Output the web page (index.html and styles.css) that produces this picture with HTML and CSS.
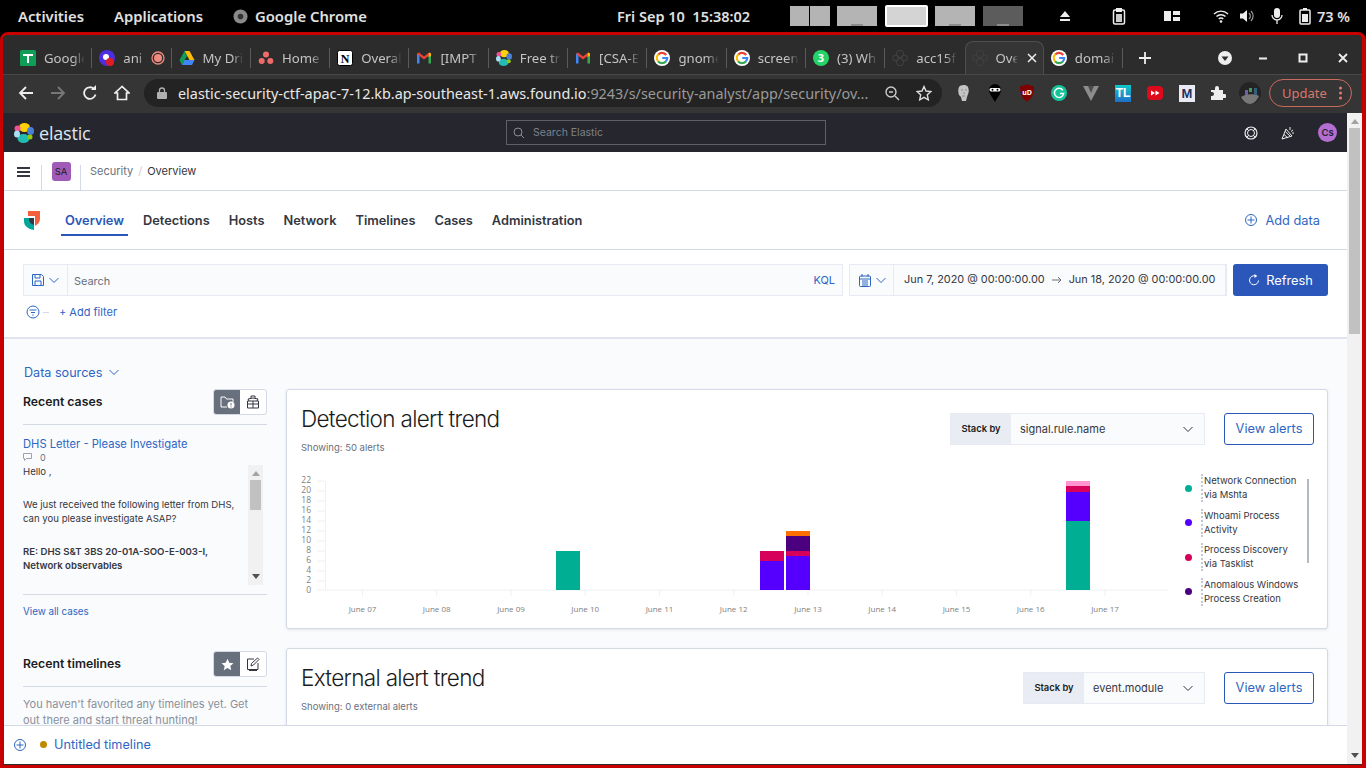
FILE: index.html
```html
<!DOCTYPE html>
<html lang="en">

<head>
    <meta charset="UTF-8">
    <title>Overview - Elastic - Google Chrome</title>
    <link rel="stylesheet" href="styles.css">
</head>

<body>
    <svg class="defs" width="0" height="0">
        <defs>
            <linearGradient id="tl-grad" x1="0" y1="0" x2="0" y2="1">
                <stop offset="0" stop-color="#12c9c9" />
                <stop offset="1" stop-color="#1f6fc8" />
            </linearGradient>
        </defs>
        <symbol id="g" viewBox="0 0 16 16">
            <circle cx="8" cy="8" r="8" fill="#fff" />
            <path d="M12.2 5A5.2 5.2 0 0 0 4.3 4.5" fill="none" stroke="#ea4335" stroke-width="2.2" />
            <path d="M4.4 4.3A5.2 5.2 0 0 0 4.3 11.6" fill="none" stroke="#fbbc05" stroke-width="2.2" />
            <path d="M4.2 11.4A5.2 5.2 0 0 0 11.9 11.4" fill="none" stroke="#34a853" stroke-width="2.2" />
            <path d="M11.7 11.6A5.2 5.2 0 0 0 13.2 8H8.2" fill="none" stroke="#4285f4" stroke-width="2.2" />
        </symbol>
        <symbol id="gmail" viewBox="0 0 16 16">
            <path d="M1 3.5 3.5 5v8.5H1z" fill="#4285f4" />
            <path d="M15 3.5 12.500 5v8.500H15z" fill="#34a853" />
            <path d="M1 3.500 3 2.500 8 6.500 13 2.500 15 3.500 12.500 6 8 9.500 3.500 6z" fill="#ea4335" />
            <path d="M13 2.500 15 3.500 15 6 12.500 7z" fill="#fbbc05" />
        </symbol>
        <symbol id="elastic" viewBox="0 0 20 20">
            <ellipse cx="10.500" cy="4.500" rx="5.500" ry="4.500" fill="#fed10a" />
            <ellipse cx="9.500" cy="15.500" rx="6" ry="4.500" fill="#24bbb1" />
            <ellipse cx="3.500" cy="5.500" rx="3" ry="3" fill="#ef5098" />
            <ellipse cx="16.500" cy="8" rx="3.500" ry="4" fill="#4a7fd6" />
            <ellipse cx="3" cy="11" rx="3" ry="3.500" fill="#a7e0f5" />
            <ellipse cx="16" cy="14" rx="2.500" ry="2.500" fill="#93c90e" />
        </symbol>
        <symbol id="elastic-dim" viewBox="0 0 20 20">
            <g fill="none" stroke="#3f3f3f" stroke-width="1.400">
                <circle cx="10" cy="5" r="4.500" />
                <circle cx="10" cy="15" r="4.500" />
                <circle cx="4.500" cy="10" r="3.500" />
                <circle cx="15.500" cy="10" r="3.500" />
            </g>
        </symbol>
        <symbol id="chev" viewBox="0 0 12 12">
            <path d="M1.500 4 6 8.500 10.500 4" fill="none" stroke="currentColor" stroke-width="1" />
        </symbol>
        <symbol id="plus-circle" viewBox="0 0 14 14">
            <circle cx="7" cy="7" r="5.500" fill="none" stroke="currentColor" />
            <path d="M7 3.500v7M3.500 7h7" stroke="currentColor" />
        </symbol>
    </svg>

    <header class="topbar">
        <span class="top-item">Activities</span>
        <span class="top-item apps">Applications</span>
        <svg class="chrome-ico" width="15" height="15" viewBox="0 0 16 16">
            <circle cx="8" cy="8" r="7.500" fill="#8a8a8a" />
            <circle cx="8" cy="8" r="3" fill="#333" />
        </svg>
        <span class="top-item">Google Chrome</span>
        <span class="clock">Fri Sep 10&nbsp; 15:38:02</span>
        <div class="workspaces">
            <div class="ws split"><i></i><i></i></div>
            <div class="ws"></div>
            <div class="ws current"></div>
            <div class="ws"></div>
            <div class="ws dark"></div>
        </div>
        <div class="tray">
            <svg class="t-eject" width="14" height="14" viewBox="0 0 14 14"><path d="M7 2 12 8H2zM2 10h10v2H2z" fill="#eee" /></svg>
            <svg class="t-clip" width="14" height="18" viewBox="0 0 14 18"><rect x="1.500" y="3" width="11" height="14" rx="1.500" fill="none" stroke="#eee" stroke-width="1.500" /><rect x="4" y="1" width="6" height="4" fill="#eee" /><rect x="4" y="7" width="6" height="8" fill="#ccc" /></svg>
            <svg class="t-layout" width="16" height="12" viewBox="0 0 16 12"><path d="M0 1h7v10H0zM9 1h7v4H9zM9 7h7v4H9z" fill="#eee" /></svg>
            <svg class="t-wifi" width="16" height="14" viewBox="0 0 16 14"><path d="M1 5a10 10 0 0 1 14 0M3.500 7.500a6.500 6.500 0 0 1 9 0M5.800 10a3 3 0 0 1 4.400 0" fill="none" stroke="#eee" stroke-width="1.400" /><circle cx="8" cy="12.500" r="1.300" fill="#eee" /></svg>
            <svg class="t-vol" width="16" height="16" viewBox="0 0 16 16"><path d="M1 5.500h3L8 2v12L4 10.500H1z" fill="#eee" /><path d="M10 5a4 4 0 0 1 0 6M12 3a7 7 0 0 1 0 10" fill="none" stroke="#999" stroke-width="1.200" /></svg>
            <svg class="t-mic" width="14" height="18" viewBox="0 0 14 18"><rect x="4" y="1" width="6" height="10" rx="3" fill="#eee" /><path d="M2 8a5 5 0 0 0 10 0M7 13v4" fill="none" stroke="#eee" stroke-width="1.300" /></svg>
            <svg class="t-bat" width="12" height="18" viewBox="0 0 12 18"><path d="M4 1h4v2H4z" fill="#eee" /><rect x="1" y="3" width="10" height="14" rx="1" fill="none" stroke="#eee" stroke-width="1.500" /><rect x="3" y="7" width="6" height="8" fill="#eee" /></svg>
            <span class="top-item pct">73 %</span>
        </div>
    </header>

    <div class="window">
        <div class="tabstrip">
            <div class="tab"><svg class="fav" viewBox="0 0 16 16"><rect width="16" height="16" rx="1.500" fill="#0f9d58" /><path d="M7 4H3v2h4v7h2V6h4V4H9z" fill="#fff" /></svg><span class="tab-title">Google</span></div>
            <div class="tab"><svg class="fav" viewBox="0 0 16 16"><circle cx="8" cy="8" r="8" fill="#4d2ee0" /><circle cx="7" cy="7" r="3" fill="#fff" /><circle cx="11" cy="12" r="4" fill="#e01b24" /></svg><span class="tab-title short">ani</span><svg class="rec" viewBox="0 0 14 14"><circle cx="7" cy="7" r="6" fill="none" stroke="#ee8a7e" stroke-width="1.300" /><circle cx="7" cy="7" r="4" fill="#ee8a7e" /></svg></div>
            <div class="tab"><svg class="fav" viewBox="0 0 16 16"><path d="M5.500 1h5l5 9h-5z" fill="#fbbc05" /><path d="M5.500 1 .5 10 3 15 8 6z" fill="#0f9d58" /><path d="M3 15h10l2.500-5H5.500z" fill="#4285f4" /></svg><span class="tab-title">My Dri</span></div>
            <div class="tab"><svg class="fav" viewBox="0 0 16 16"><circle cx="8" cy="4.500" r="3" fill="#f06a6a" /><circle cx="3.700" cy="11" r="3" fill="#f06a6a" /><circle cx="12.300" cy="11" r="3" fill="#f06a6a" /></svg><span class="tab-title">Home</span></div>
            <div class="tab"><svg class="fav" viewBox="0 0 16 16"><rect x=".5" y=".5" width="15" height="15" rx="2" fill="#fff" stroke="#000" /><text x="8" y="13" class="fav-n">N</text></svg><span class="tab-title">Overal</span></div>
            <div class="tab"><svg class="fav"><use href="#gmail" /></svg><span class="tab-title">[IMPT</span></div>
            <div class="tab"><svg class="fav"><use href="#elastic" /></svg><span class="tab-title">Free tr</span></div>
            <div class="tab"><svg class="fav"><use href="#gmail" /></svg><span class="tab-title">[CSA-E</span></div>
            <div class="tab"><svg class="fav"><use href="#g" /></svg><span class="tab-title">gnome</span></div>
            <div class="tab"><svg class="fav"><use href="#g" /></svg><span class="tab-title">screen</span></div>
            <div class="tab"><svg class="fav" viewBox="0 0 16 16"><circle cx="8" cy="8" r="8" fill="#25d366" /><text x="8" y="12" class="fav-3">3</text></svg><span class="tab-title">(3) Wh</span></div>
            <div class="tab no-sep"><svg class="fav"><use href="#elastic-dim" /></svg><span class="tab-title">acc15f</span></div>
            <div class="tab active"><svg class="fav"><use href="#elastic-dim" /></svg><span class="tab-title short">Ove</span><svg class="tab-x" viewBox="0 0 10 10"><path d="M1 1l8 8M9 1l-8 8" stroke="#eee" stroke-width="1.500" /></svg></div>
            <div class="tab"><svg class="fav"><use href="#g" /></svg><span class="tab-title">domai</span></div>
            <svg class="new-tab" width="14" height="14" viewBox="0 0 14 14"><path d="M7 1v12M1 7h12" stroke="#f0f0f0" stroke-width="1.800" /></svg>
            <div class="win-btns">
                <svg class="win-menu" width="14" height="14" viewBox="0 0 14 14"><circle cx="7" cy="7" r="7" fill="#eee" /><path d="M3.500 5.500h7L7 10z" fill="#2c2c2c" /></svg>
                <svg width="10" height="10" viewBox="0 0 10 10"><path d="M1 5.500h8" stroke="#eee" stroke-width="2" /></svg>
                <svg width="10" height="10" viewBox="0 0 10 10"><rect x="1.500" y="1.500" width="7" height="7" fill="none" stroke="#eee" stroke-width="2" /></svg>
                <svg width="10" height="10" viewBox="0 0 10 10"><path d="M1 1l8 8M9 1l-8 8" stroke="#eee" stroke-width="1.800" /></svg>
            </div>
        </div>

        <div class="toolbar">
            <svg class="nav-ico" viewBox="0 0 16 16"><path d="M15 8H2M8 2 2 8l6 6" fill="none" stroke="#eee" stroke-width="1.800" /></svg>
            <svg class="nav-ico" viewBox="0 0 16 16"><path d="M1 8h13M8 2l6 6-6 6" fill="none" stroke="#777" stroke-width="1.800" /></svg>
            <svg class="nav-ico" viewBox="0 0 16 16"><path d="M13.500 9.500A5.800 5.800 0 1 1 12 4" fill="none" stroke="#eee" stroke-width="1.800" /><path d="M9 5h5V0z" fill="#eee" /></svg>
            <svg class="nav-ico" viewBox="0 0 16 16"><path d="M8 1.500 1 8h2.500v6.500h9V8H15z" fill="none" stroke="#eee" stroke-width="1.700" /></svg>
            <div class="omnibox">
                <svg class="lock" width="10" height="12" viewBox="0 0 10 12"><rect y="5" width="10" height="7" rx="1" fill="#b0b0b0" /><path d="M2.500 5.500V3.500a2.500 2.500 0 0 1 5 0v2" fill="none" stroke="#b0b0b0" stroke-width="1.300" /></svg>
                <span class="url"><b>elastic-security-ctf-apac-7-12.kb.ap-southeast-1.aws.found.io</b>:9243/s/security-analyst/app/security/ov...</span>
                <svg class="omni-ico" viewBox="0 0 16 16"><circle cx="7" cy="7" r="5" fill="none" stroke="#ccc" stroke-width="1.400" /><path d="M11 11l4 4M5 7h4" stroke="#ccc" stroke-width="1.400" /></svg>
                <svg class="omni-ico" viewBox="0 0 16 16"><path d="M8 1.500 10 6l5 .5-3.700 3.300 1 5L8 12.300 3.700 14.800l1-5L1 6.500 6 6z" fill="none" stroke="#ddd" stroke-width="1.400" /></svg>
            </div>
            <div class="exts">
                <svg class="ext tall" viewBox="0 0 16 18"><path d="M4 3c1-2 7-3 9 0 1 3 1 5 0 7l-1 3-1 4H7l-1-4-2-2C3 8 3 5 4 3z" fill="#c4c4c4" /><path d="M6 6h2M10 6h2M8 9h2M7 12h3" stroke="#8a8a8a" /></svg>
                <svg class="ext tall" viewBox="0 0 16 18"><path d="M2 6a6 6 0 0 1 12 0c0 4-4 8-6 12-2-4-6-8-6-12z" fill="#000" /><rect x="2.500" y="4" width="11" height="3.500" rx="1.700" fill="#fff" /><circle cx="5.500" cy="5.700" r="1" fill="#000" /><circle cx="10.500" cy="5.700" r="1" fill="#000" /></svg>
                <svg class="ext tall" viewBox="0 0 16 18"><path d="M8 .5l7 2c0 7-2 12-7 15C3 14.500 1 9.500 1 2.500z" fill="#800000" /><text x="8" y="11" class="ext-ub">uD</text></svg>
                <svg class="ext" viewBox="0 0 16 16"><circle cx="8" cy="8" r="8" fill="#15c39a" /><path d="M11.800 5.200A4.600 4.600 0 1 0 12.600 8.500H9" fill="none" stroke="#fff" stroke-width="1.500" /></svg>
                <svg class="ext" viewBox="0 0 16 16"><path d="M0 1h6l2 5 2-5h6L8 16z" fill="#8c8c8c" /><path d="M5 1h6L8 8z" fill="#4c4c4c" /></svg>
                <div class="ext-tl">TL</div>
                <svg class="ext" viewBox="0 0 16 16"><rect width="16" height="14" y="1" rx="4" fill="#dd0a1c" /><path d="M4 5.500v5L8 8zM8.500 5.500v5L12.500 8z" fill="#fff" /></svg>
                <div class="ext-m">M</div>
                <svg class="ext" viewBox="0 0 16 16"><path d="M1 5h4V3a2 2 0 0 1 4 0v2h4v4h1.500a2 2 0 0 1 0 4H13v2H1v-4h1a2 2 0 0 0 0-4H1z" fill="#eee" /></svg>
                <svg class="ext avatar" viewBox="0 0 22 22"><circle cx="11" cy="11" r="11" fill="#242424" /><path d="M2 15c3-3 14-4 18-1-2 5-6 8-9 8-4 0-7-3-9-7z" fill="#777" /><rect x="6" y="8" width="3" height="5" fill="#6f5fa8" /><rect x="10" y="6" width="3" height="4" fill="#3f9a55" /><rect x="15" y="6" width="3" height="7" fill="#35607d" /></svg>
            </div>
            <div class="update">Update<svg width="3" height="14" viewBox="0 0 3 14"><circle cx="1.500" cy="2" r="1.500" fill="#e9786a" /><circle cx="1.500" cy="7" r="1.500" fill="#e9786a" /><circle cx="1.500" cy="12" r="1.500" fill="#e9786a" /></svg></div>
        </div>

        <div class="viewport">
            <div class="page">
                <div class="kbn-head">
                    <div class="kbn-logo">
                        <svg width="20" height="20"><use href="#elastic" /></svg>
                        <span>elastic</span>
                    </div>
                    <div class="kbn-search">
                        <svg width="12" height="12" viewBox="0 0 12 12"><circle cx="5" cy="5" r="4" fill="none" stroke="#8b8d94" /><path d="M8 8l3 3" stroke="#8b8d94" /></svg>
                        <span>Search Elastic</span>
                    </div>
                    <div class="kbn-right">
                        <svg width="14" height="14" viewBox="0 0 14 14"><circle cx="7" cy="7" r="6" fill="none" stroke="#eee" stroke-width="1.200" /><circle cx="7" cy="7" r="3.500" fill="none" stroke="#eee" /><path d="M2.800 2.800l2 2M11.200 2.800l-2 2M2.800 11.200l2-2M11.200 11.200l-2-2" stroke="#eee" /></svg>
                        <svg width="14" height="14" viewBox="0 0 14 14"><path d="M1 13 5 3l6 7zM9 1v3M12 4l-2 1.500M13 7h-2" fill="none" stroke="#eee" /><path d="M3 8.500 7 12M4.200 5.500 9 10" stroke="#eee" /></svg>
                        <div class="user">Cs</div>
                    </div>
                </div>

                <div class="crumbs">
                    <div class="burger"><i></i><i></i><i></i></div>
                    <div class="space-cell"><div class="space">SA</div></div>
                    <span class="crumb">Security</span>
                    <span class="crumb-sep">/</span>
                    <span class="crumb-on">Overview</span>
                </div>

                <nav class="secnav">
                    <svg class="sec-logo" width="16" height="19" viewBox="0 0 16 19">
                        <path d="M4 0H16V8C16 11 14 13 11 15V5H4z" fill="#f4603c" />
                        <path d="M0 7H10V19C4 18 0 15 0 10z" fill="#00a69b" />
                        <path d="M5 7h5v7C7 13 5 11 5 9z" fill="#343741" />
                    </svg>
                    <a class="nav-link on">Overview</a>
                    <a class="nav-link">Detections</a>
                    <a class="nav-link">Hosts</a>
                    <a class="nav-link">Network</a>
                    <a class="nav-link">Timelines</a>
                    <a class="nav-link">Cases</a>
                    <a class="nav-link">Administration</a>
                    <a class="add-data"><svg width="14" height="14" class="blue"><use href="#plus-circle" /></svg>Add data</a>
                </nav>

                <div class="query">
                    <div class="query-row">
                        <div class="field search-field">
                            <div class="prepend">
                                <svg width="14" height="14" viewBox="0 0 14 14" class="blue"><path d="M1.500 1.500h9l2 2v9h-11zM4 1.500v3.500h5V1.500M4 12.500V8h6v4.500" fill="none" stroke="currentColor" /></svg>
                                <svg width="12" height="12" class="blue"><use href="#chev" /></svg>
                            </div>
                            <span class="placeholder">Search</span>
                            <span class="kql">KQL</span>
                        </div>
                        <div class="field date-field">
                            <div class="prepend">
                                <svg width="12" height="13" viewBox="0 0 12 13" class="blue"><rect x=".5" y="2" width="11" height="10.500" rx="1" fill="none" stroke="currentColor" /><path d="M.5 5h11M3 0v3M9 0v3M3 7h6M3 9h6M3 11h6" stroke="currentColor" /></svg>
                                <svg width="12" height="12" class="blue"><use href="#chev" /></svg>
                            </div>
                            <span class="date">Jun 7, 2020 @ 00:00:00.00</span>
                            <svg width="10" height="8" viewBox="0 0 10 8"><path d="M0 4h9M6 1l3 3-3 3" fill="none" stroke="#69707d" /></svg>
                            <span class="date">Jun 18, 2020 @ 00:00:00.00</span>
                        </div>
                        <div class="refresh">
                            <svg width="12" height="12" viewBox="0 0 12 12"><path d="M10.500 6.500A4.500 4.500 0 1 1 7.500 2" fill="none" stroke="#fff" /><path d="M6.500 0v4l2.800-2z" fill="#fff" /></svg>
                            Refresh
                        </div>
                    </div>
                    <div class="filter-row">
                        <svg width="14" height="14" viewBox="0 0 14 14" class="blue"><circle cx="7" cy="7" r="6" fill="none" stroke="currentColor" /><path d="M3.500 5h7M5 7.500h4M6.300 10h1.400" stroke="currentColor" /></svg>
                        <i class="dash"></i>
                        <a class="add-filter">+ Add filter</a>
                    </div>
                </div>

                <div class="content">
                    <aside class="side">
                        <a class="sources">Data sources<svg width="12" height="12"><use href="#chev" /></svg></a>

                        <div class="side-head">
                            <h3>Recent cases</h3>
                            <div class="toggle">
                                <span class="on"><svg width="15" height="14" viewBox="0 0 15 14"><path d="M1 12V2h4l1.500 2H13v3M1 12h6" fill="none" stroke="#fff" /><circle cx="11" cy="10" r="3.500" fill="#fff" /><path d="M11 8v2.500M11 11.500v1" stroke="#69707d" /></svg></span>
                                <span><svg width="14" height="14" viewBox="0 0 14 14"><path d="M1.500 6h11v7h-11zM1.500 9h11M7 6v7M3 6 2 4l5-1 5 1-1 2M5 3V1h4v2" fill="none" stroke="#343741" /></svg></span>
                            </div>
                        </div>
                        <div class="case">
                            <a class="case-title">DHS Letter - Please Investigate</a>
                            <div class="comments"><svg width="10" height="9" viewBox="0 0 10 9"><path d="M.5.500h8v5h-5l-2 2v-2h-1z" fill="none" stroke="#98a2b3" /></svg>0</div>
                            <div class="case-body">
                                <div class="case-text">
                                    <p>Hello ,</p>
                                    <p>We just received the following letter from DHS, can you please investigate ASAP?</p>
                                    <p><b>RE: DHS S&amp;T 3BS 20-01A-SOO-E-003-I, Network observables</b></p>
                                </div>
                                <div class="sb mini">
                                    <i class="up"></i>
                                    <b></b>
                                    <i class="down"></i>
                                </div>
                            </div>
                        </div>
                        <a class="view-all">View all cases</a>

                        <div class="side-head second">
                            <h3>Recent timelines</h3>
                            <div class="toggle">
                                <span class="on"><svg width="13" height="13" viewBox="0 0 16 16"><path d="M8 1l2.200 4.800 5.200.6-3.900 3.500 1.100 5.100L8 12.400 3.400 15l1.100-5.100L.6 6.400l5.200-.6z" fill="#fff" /></svg></span>
                                <span><svg width="14" height="14" viewBox="0 0 14 14"><path d="M8 2H1.500v10.500H12V6M5 9l.5-2.500L11.500 1 13 2.500 7.500 8zM3 13.500h8" fill="none" stroke="#343741" /></svg></span>
                            </div>
                        </div>
                        <p class="empty">You haven't favorited any timelines yet. Get out there and start threat hunting!</p>
                    </aside>

                    <main class="cards">
                        <section class="card">
                            <div class="card-head">
                                <div>
                                    <h2>Detection alert trend</h2>
                                    <div class="showing">Showing: 50 alerts</div>
                                </div>
                                <div class="controls">
                                    <div class="stack wide"><label>Stack by</label><span>signal.rule.name<svg width="12" height="12"><use href="#chev" /></svg></span></div>
                                    <a class="view-btn">View alerts</a>
                                </div>
                            </div>
                            <div class="chart-row">
                                <svg class="chart" width="871" height="150" viewBox="301 470 871 150">
                                    <path d="M325.500 481V590M317 590H1168" class="axis" />
                                    <path d="M317 481h8M317 491h8M317 501h8M317 511h8M317 521h8M317 531h8M317 541h8M317 551h8M317 561h8M317 571h8M317 581h8" class="axis" />
                                    <path d="M362.500 590v6M436.700 590v6M511 590v6M585.200 590v6M659.500 590v6M733.700 590v6M808 590v6M882.200 590v6M956.500 590v6M1030.700 590v6M1105 590v6" class="axis" />
                                    <g class="y-label">
                                        <text x="311" y="483">22</text><text x="311" y="493">20</text><text x="311" y="503">18</text><text x="311" y="513">16</text><text x="311" y="523">14</text><text x="311" y="533">12</text><text x="311" y="543">10</text><text x="311" y="553">8</text><text x="311" y="563">6</text><text x="311" y="573">4</text><text x="311" y="583">2</text><text x="311" y="593">0</text>
                                    </g>
                                    <g class="x-label">
                                        <text x="362.500" y="612">June 07</text><text x="436.700" y="612">June 08</text><text x="511" y="612">June 09</text><text x="585.200" y="612">June 10</text><text x="659.500" y="612">June 11</text><text x="733.700" y="612">June 12</text><text x="808" y="612">June 13</text><text x="882.200" y="612">June 14</text><text x="956.500" y="612">June 15</text><text x="1030.700" y="612">June 16</text><text x="1105" y="612">June 17</text>
                                    </g>
                                    <rect x="556" y="551" width="24" height="39" fill="#00ae94" />
                                    <rect x="760" y="561" width="24" height="29" fill="#5500ff" />
                                    <rect x="760" y="551" width="24" height="10" fill="#d6005a" />
                                    <rect x="786" y="556" width="24" height="34" fill="#5500ff" />
                                    <rect x="786" y="551" width="24" height="5" fill="#d6005a" />
                                    <rect x="786" y="536" width="24" height="15" fill="#4a007f" />
                                    <rect x="786" y="531" width="24" height="5" fill="#ff7000" />
                                    <rect x="1066" y="521" width="24" height="69" fill="#00ae94" />
                                    <rect x="1066" y="492" width="24" height="29" fill="#5500ff" />
                                    <rect x="1066" y="486" width="24" height="6" fill="#d6005a" />
                                    <rect x="1066" y="481" width="24" height="5" fill="#ff94d0" />
                                </svg>
                                <ul class="legend">
                                    <li><i class="dot c1"></i><span>Network Connection via Mshta</span></li>
                                    <li><i class="dot c2"></i><span>Whoami Process Activity</span></li>
                                    <li><i class="dot c3"></i><span>Process Discovery via Tasklist</span></li>
                                    <li><i class="dot c4"></i><span>Anomalous Windows Process Creation</span></li>
                                </ul>
                                <div class="legend-bar"></div>
                            </div>
                        </section>

                        <section class="card">
                            <div class="card-head">
                                <div>
                                    <h2>External alert trend</h2>
                                    <div class="showing">Showing: 0 external alerts</div>
                                </div>
                                <div class="controls">
                                    <div class="stack"><label>Stack by</label><span>event.module<svg width="12" height="12"><use href="#chev" /></svg></span></div>
                                    <a class="view-btn">View alerts</a>
                                </div>
                            </div>
                        </section>
                    </main>
                </div>

                <div class="timeline-bar">
                    <svg width="14" height="14" class="blue"><use href="#plus-circle" /></svg>
                    <i class="tl-dot"></i>
                    <a>Untitled timeline</a>
                </div>
            </div>

            <div class="sb">
                <i class="up"></i>
                <b></b>
                <i class="down"></i>
            </div>
        </div>
    </div>
</body>

</html>
```

FILE: styles.css
```css
* {
    margin: 0;
    padding: 0;
    box-sizing: border-box;
    list-style: none;
}

html,
body {
    width: 1366px;
    height: 768px;
    overflow: hidden;
    background: #000;
}

body {
    font-family: Inter, "Liberation Sans", sans-serif;
}

a {
    color: #2d66c3;
}

.defs {
    position: absolute;
}

.blue {
    color: #2d66c3;
}

/* gnome top bar */
.topbar {
    height: 32px;
    display: flex;
    align-items: center;
    padding-left: 18px;
    font-family: "Noto Sans", sans-serif;
    color: #e0e0e0;
}

.top-item {
    font-size: 14.800px;
    font-weight: 600;
    white-space: nowrap;
}

.apps {
    margin-left: 30px;
}

.chrome-ico {
    margin: 0 7px 0 30px;
}

.clock {
    margin-left: 250px;
    width: 173px;
    font-size: 14.500px;
    font-weight: 600;
    white-space: nowrap;
}

.workspaces {
    display: flex;
    gap: 7.500px;
    height: 21px;
}

.ws {
    width: 40px;
    height: 20px;
    background: linear-gradient(90deg, transparent 35%, #8c8c8c 35%, #8c8c8c 65%, transparent 65%) bottom / 100% 2px no-repeat #b4b4b4;
    display: flex;
    gap: 1px;
}

.ws.split {
    background: transparent;
}

.ws.split i {
    flex: 1;
    background: #b4b4b4;
}

.ws.current {
    width: 43px;
    height: 22px;
    margin-top: -1px;
    background: #d4d4d4;
    border: 2px solid #fff;
    border-radius: 2px;
}

.ws.dark {
    background: linear-gradient(90deg, transparent 35%, #8c8c8c 35%, #8c8c8c 65%, transparent 65%) bottom / 100% 2px no-repeat #5c5c5c;
}

.tray {
    flex: 1;
    position: relative;
    height: 32px;
}

.tray svg,
.tray .pct {
    position: absolute;
}

.t-eject {
    left: 35px;
    top: 9px;
}

.t-clip {
    left: 89px;
    top: 7px;
}

.t-layout {
    left: 141px;
    top: 10px;
}

.t-wifi {
    left: 190px;
    top: 9px;
}

.t-vol {
    left: 216px;
    top: 8px;
}

.t-mic {
    left: 247px;
    top: 7px;
}

.t-bat {
    left: 276px;
    top: 7px;
}

.tray .pct {
    left: 294px;
    top: 6px;
    font-size: 14.500px;
}

/* browser window */
.window {
    height: 736px;
    border: 3px solid #c70000;
    border-right-width: 4px;
    border-radius: 8px 8px 0 0;
    background: #2c2c2c;
    display: flex;
    flex-direction: column;
    overflow: hidden;
    font-family: "Noto Sans", sans-serif;
}

.tabstrip {
    height: 39px;
    flex: none;
    display: flex;
    padding: 6px 0 0 10px;
    background: #2c2c2c;
    position: relative;
}

.tab {
    width: 79.300px;
    height: 33px;
    display: flex;
    align-items: center;
    padding-left: 7px;
    position: relative;
    color: #c4c4c4;
    font-size: 13.200px;
}

.tab::after {
    content: "";
    position: absolute;
    right: 0;
    top: 7px;
    height: 20px;
    width: 1px;
    background: #5a5a5a;
}

.tab.no-sep::after,
.tab.active::after {
    display: none;
}

.tab.active {
    background: #353535;
    border: 1px solid #4e4e4e;
    border-bottom: 0;
    border-radius: 8px 8px 0 0;
    padding-left: 6px;
}

.fav {
    width: 16px;
    height: 16px;
    flex: none;
}

.fav-n {
    font: 700 12px "Liberation Serif", serif;
    text-anchor: middle;
    fill: #000;
}

.fav-3 {
    font: 700 11px "Noto Sans", sans-serif;
    text-anchor: middle;
    fill: #fff;
}

.tab-title {
    margin-left: 8px;
    width: 41px;
    overflow: hidden;
    white-space: nowrap;
    -webkit-mask-image: linear-gradient(90deg, #000 70%, transparent);
    mask-image: linear-gradient(90deg, #000 70%, transparent);
}

.tab-title.short {
    width: 22px;
}

.rec {
    width: 14px;
    height: 14px;
    margin-left: 6px;
}

.tab-x {
    width: 10px;
    height: 10px;
    margin-left: 9px;
}

.new-tab {
    margin: 10px 0 0 15px;
}

.win-btns {
    position: absolute;
    right: 14px;
    top: 6px;
    height: 33px;
    display: flex;
    align-items: center;
    gap: 30px;
}

.win-menu {
    margin-right: -4px;
}

.toolbar {
    height: 39px;
    flex: none;
    display: flex;
    align-items: center;
    padding: 0 9px 2px 15px;
    background: #353535;
    border-top: 1px solid #484848;
}

.nav-ico {
    width: 16px;
    height: 16px;
    margin-right: 16px;
    flex: none;
}

.omnibox {
    width: 798px;
    height: 28px;
    margin-left: -2px;
    flex: none;
    display: flex;
    align-items: center;
    border-radius: 14px;
    background: #232323;
    padding: 0 10px 0 13px;
}

.lock {
    margin-right: 11px;
    flex: none;
}

.url {
    font-size: 14.400px;
    color: #9a9a9a;
    white-space: nowrap;
    width: 700px;
    overflow: hidden;
}

.url b {
    font-weight: 400;
    color: #e8e8e8;
}

.omni-ico {
    width: 16px;
    height: 16px;
    margin-left: 16px;
    flex: none;
}

.exts {
    display: flex;
    align-items: center;
    margin-left: 13px;
}

.ext {
    width: 16px;
    height: 16px;
    margin-right: 16px;
    flex: none;
}

.ext.tall {
    height: 18px;
}

.ext.avatar {
    width: 22px;
    height: 22px;
    margin: 0 0 0 -3px;
}

.ext-ub {
    font: 700 7px "Noto Sans", sans-serif;
    text-anchor: middle;
    fill: #fff;
}

.ext-tl {
    width: 16px;
    height: 17px;
    margin-right: 16px;
    background: linear-gradient(#12c9c9, #1f6fc8);
    color: #fff;
    font: 700 12px/17px "Liberation Sans", sans-serif;
    text-align: center;
}

.ext-m {
    width: 16px;
    height: 17px;
    margin-right: 15px;
    background: #e8eaf4;
    color: #23315f;
    font: 700 13px/17px "Liberation Sans", sans-serif;
    text-align: center;
}

.update {
    width: 83px;
    height: 28px;
    margin-left: 8px;
    flex: none;
    border: 1px solid #c96a5e;
    border-radius: 14px;
    color: #d9776b;
    font-size: 13px;
    display: flex;
    align-items: center;
    justify-content: space-between;
    padding: 0 9px 0 12px;
}

/* kibana page */
.viewport {
    flex: 1;
    display: flex;
    min-height: 0;
    background: #fff;
    border-bottom: 1px solid #2c2c2c;
}

.page {
    flex: 1;
    min-width: 0;
    display: flex;
    flex-direction: column;
    border-left: 1px solid #3a3a3a;
    font-family: Inter, "Liberation Sans", sans-serif;
    color: #343741;
}

.kbn-head {
    height: 39px;
    flex: none;
    display: flex;
    align-items: center;
    background: #25262e;
    margin-left: -1px;
    padding-left: 11px;
    position: relative;
}

.kbn-logo {
    display: flex;
    align-items: center;
    gap: 5px;
    width: 492px;
    color: #dfe5ef;
    font-size: 18px;
    font-weight: 400;
}

.kbn-logo span {
    font-family: "Open Sans", sans-serif;
    letter-spacing: -.2px;
}

.kbn-search {
    width: 320px;
    height: 25px;
    border: 1px solid #5e6068;
    display: flex;
    align-items: center;
    gap: 8px;
    padding-left: 6px;
    font-size: 10.500px;
    color: #7f8189;
}

.kbn-right {
    margin-left: auto;
    display: flex;
    align-items: center;
    gap: 23px;
    padding-right: 10px;
}

.user {
    width: 19px;
    height: 19px;
    border-radius: 50%;
    background: #b46dd1;
    color: #25262e;
    font-size: 9.500px;
    font-weight: 600;
    line-height: 19px;
    text-align: center;
}

.crumbs {
    height: 39px;
    flex: none;
    display: flex;
    align-items: center;
    border-bottom: 1px solid #d3dae6;
    font-size: 11px;
}

.burger {
    width: 38px;
    height: 25px;
    align-self: flex-end;
    padding: 2px 0 0 13px;
    border-right: 1px solid #d3dae6;
    flex: none;
}

.burger i {
    display: block;
    width: 13px;
    height: 2px;
    background: #343741;
    margin-bottom: 2px;
}

.space-cell {
    width: 39px;
    height: 25px;
    align-self: flex-end;
    display: flex;
    align-items: flex-start;
    justify-content: center;
    border-right: 1px solid #d3dae6;
    flex: none;
}

.space {
    width: 19px;
    height: 19px;
    margin-top: -3px;
    border-radius: 3px;
    background: #a05bb8;
    color: #1a1c21;
    font-size: 9.500px;
    font-weight: 400;
    line-height: 19px;
    text-align: center;
}

.crumb {
    margin-left: 9px;
    color: #69707d;
}

.crumb-sep {
    margin: 0 5px;
    color: #c6ccd6;
}

.crumb-on {
    color: #343741;
}

.secnav {
    height: 59px;
    flex: none;
    display: flex;
    align-items: center;
    gap: 19px;
    padding: 0 27px 0 20px;
    border-bottom: 1px solid #d3dae6;
}

.sec-logo {
    margin-right: 6px;
}

.nav-link {
    position: relative;
    font-size: 12.800px;
    font-weight: 600;
    color: #343741;
}

.nav-link.on {
    color: #2958b8;
}

.nav-link.on::after {
    content: "";
    position: absolute;
    left: -4px;
    right: -4px;
    bottom: -8px;
    height: 2px;
    background: #2958b8;
}

.add-data {
    margin-left: auto;
    display: flex;
    align-items: center;
    gap: 7px;
    font-size: 12.800px;
}

.query {
    height: 89px;
    flex: none;
    padding: 14px 19px 0;
    background: #fff;
    border-bottom: 2px solid #dfe4ef;
}

.query-row {
    display: flex;
    height: 32px;
}

.field {
    display: flex;
    align-items: center;
    height: 32px;
    background: #fafbfd;
    border: 1px solid #e6eaf2;
    font-size: 10.900px;
}

.search-field {
    width: 820px;
}

.prepend {
    height: 30px;
    width: 44px;
    flex: none;
    display: flex;
    align-items: center;
    gap: 3px;
    padding-left: 7px;
    border-right: 1px solid #e6eaf2;
}

.placeholder {
    margin-left: 6px;
    color: #69707d;
    padding-top: 2px;
}

.kql {
    margin-left: auto;
    margin-right: 7px;
    color: #2d66c3;
}

.date-field {
    width: 378px;
    margin-left: 6px;
    gap: 7px;
    color: #343741;
    border-right-width: 2px;
}

.date {
    white-space: nowrap;
    padding-bottom: 2px;
}

.date-field .prepend {
    margin-right: 3px;
    padding-left: 9px;
    gap: 4px;
}

.refresh {
    width: 95px;
    height: 32px;
    margin-left: 6px;
    border-radius: 3px;
    background: #2a57b9;
    color: #fff;
    font-size: 12.800px;
    display: flex;
    align-items: center;
    justify-content: center;
    gap: 6px;
}

.filter-row {
    display: flex;
    align-items: center;
    height: 16px;
    margin-top: 8px;
    padding-left: 3px;
}

.dash {
    width: 6px;
    height: 1px;
    background: #d3dae6;
    margin: 0 10px 0 3px;
}

.add-filter {
    font-size: 11px;
}

.content {
    flex: 1;
    min-height: 0;
    display: flex;
    gap: 19px;
    padding: 23px 19px 0;
    background: #fafbfd;
    overflow: hidden;
}

.side {
    width: 244px;
    flex: none;
}

.sources {
    display: flex;
    align-items: center;
    gap: 6px;
    height: 20px;
    padding-left: 1px;
    font-size: 12.600px;
}

.side-head {
    height: 36px;
    margin-top: 7px;
    display: flex;
    justify-content: space-between;
    align-items: flex-start;
    border-bottom: 1px solid #d3dae6;
}

.side-head.second {
    margin-top: 33px;
}

.side-head h3 {
    font-size: 12.250px;
    font-weight: 600;
    color: #1a1c21;
    line-height: 26px;
}

.toggle {
    display: flex;
    width: 54px;
    height: 26px;
    border: 1px solid #d3dae6;
    border-radius: 3px;
    overflow: hidden;
    background: #fff;
}

.toggle span {
    flex: 1;
    display: flex;
    align-items: center;
    justify-content: center;
}

.toggle .on {
    background: #69707d;
}

.case {
    padding-top: 13px;
    border-bottom: 1px solid #d3dae6;
    height: 170px;
}

.case-title {
    display: block;
    font-size: 11.200px;
    line-height: 12px;
}

.comments {
    display: flex;
    align-items: center;
    gap: 7px;
    height: 15px;
    font-size: 9px;
    color: #69707d;
}

.case-body {
    display: flex;
    height: 120px;
}

.case-text {
    width: 225px;
    height: 120px;
    overflow: hidden;
    font-size: 9.600px;
    line-height: 14px;
    color: #343741;
    flex: none;
}

.case-text p {
    margin-bottom: 19px;
}

.case-text b {
    font-weight: 600;
}

.view-all {
    display: block;
    margin-top: 11px;
    font-size: 9.800px;
    line-height: 12px;
}

.empty {
    margin-top: 9px;
    font-size: 11px;
    line-height: 16px;
    color: #8a909b;
}

.cards {
    flex: 1;
    min-width: 0;
    padding-top: 27px;
}

.card {
    height: 240px;
    margin-bottom: 19px;
    border: 1px solid #d3dae6;
    border-radius: 3px;
    background: #fff;
    padding: 14px 13px 0 14px;
    box-shadow: 0 1px 3px rgba(152, 162, 179, .25);
}

.card-head {
    display: flex;
    justify-content: space-between;
    align-items: flex-start;
}

.card-head h2 {
    font-size: 22.500px;
    letter-spacing: -.03em;
    font-weight: 300;
    color: #1a1c21;
    line-height: 30px;
}

.showing {
    margin-top: 8px;
    font-size: 9.500px;
    line-height: 12px;
    color: #69707d;
}

.controls {
    display: flex;
    gap: 19px;
    margin-top: 9px;
}

.stack {
    display: flex;
    height: 32px;
    width: 182px;
    border: 1px solid #e6eaf2;
    background: #fafbfd;
    font-size: 11px;
}

.stack.wide {
    width: 255px;
}

.stack label {
    flex: none;
    width: 60px;
    text-align: center;
    background: #e9edf3;
    font-size: 9.400px;
    font-weight: 600;
    color: #1a1c21;
    line-height: 30px;
}

.stack span {
    flex: 1;
    display: flex;
    align-items: center;
    justify-content: space-between;
    padding: 0 10px 0 9px;
    color: #343741;
}

.view-btn {
    width: 90px;
    height: 32px;
    border: 1px solid #2958b8;
    border-radius: 3px;
    font-size: 12.800px;
    line-height: 30px;
    text-align: center;
}

.chart-row {
    display: flex;
    margin-top: 16px;
    position: relative;
}

.chart {
    flex: none;
}

.axis {
    stroke: #eef0f3;
    fill: none;
}

.y-label text {
    font: 8.500px "Open Sans", sans-serif;
    fill: #808080;
    text-anchor: end;
}

.x-label text {
    font: 8px "Open Sans", sans-serif;
    fill: #808080;
    text-anchor: middle;
}

.legend {
    margin-left: 13px;
    margin-top: 4px;
    width: 116px;
    flex: none;
}

.legend li {
    display: flex;
    align-items: center;
    height: 28px;
    margin-bottom: 6.500px;
}

.dot {
    width: 7px;
    height: 7px;
    border-radius: 50%;
    flex: none;
    margin-right: 9px;
}

.c1 {
    background: #00ae94;
}

.c2 {
    background: #5500ff;
}

.c3 {
    background: #d6005a;
}

.c4 {
    background: #4a007f;
}

.legend span {
    font-size: 9.500px;
    line-height: 14px;
    color: #343741;
    border-left: 2px dotted #c2c8d4;
    padding-left: 1px;
    width: 99px;
}

.legend-bar {
    position: absolute;
    right: 5px;
    top: 9px;
    width: 2px;
    height: 84px;
    background: #b5bac2;
}

.timeline-bar {
    height: 39px;
    flex: none;
    display: flex;
    align-items: center;
    padding: 0 0 1px 9px;
    background: #fff;
    border-top: 1px solid #d3dae6;
    font-size: 12.700px;
}

.tl-dot {
    width: 7px;
    height: 7px;
    border-radius: 50%;
    background: #c08a00;
    margin: 0 7px 0 13px;
}

/* native scrollbars */
.sb {
    width: 15px;
    flex: none;
    display: flex;
    flex-direction: column;
    align-items: center;
    background: #f1f1f1;
    padding-top: 6px;
}

.sb .up {
    width: 0;
    height: 0;
    border: 4px solid transparent;
    border-top: 0;
    border-bottom: 5px solid #a3a3a3;
}

.sb b {
    width: 11px;
    height: 206px;
    margin-top: 4px;
    background: #c1c1c1;
}

.sb .down {
    width: 0;
    height: 0;
    margin: auto 0 6px;
    border: 4px solid transparent;
    border-bottom: 0;
    border-top: 5px solid #505050;
}

.sb.mini {
    height: 120px;
}

.sb.mini b {
    height: 30px;
}
```
